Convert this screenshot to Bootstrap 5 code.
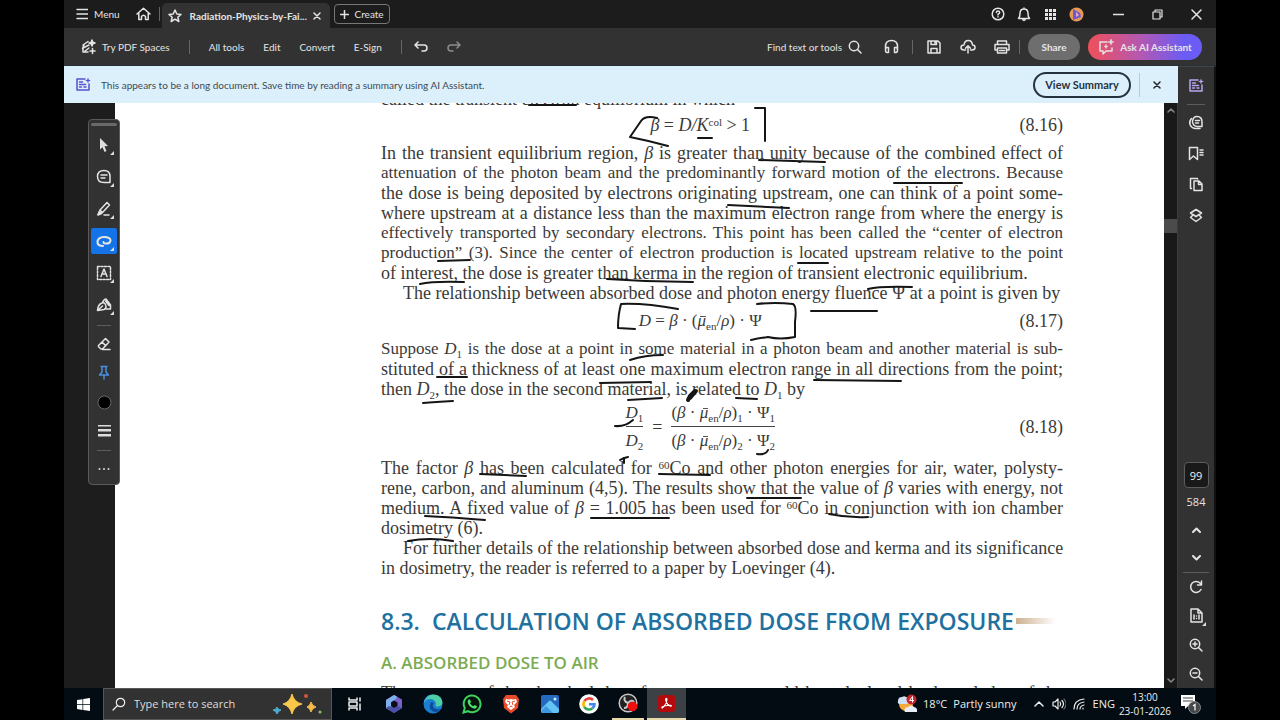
<!DOCTYPE html>
<html lang="en">
<head>
<meta charset="utf-8">
<meta name="viewport" content="width=device-width, initial-scale=1">
<title>Radiation-Physics-by-Fai...</title>
<link href="https://cdn.jsdelivr.net/npm/bootstrap@5.3.0/dist/css/bootstrap.min.css" rel="stylesheet">
<script defer src="https://cdn.jsdelivr.net/npm/bootstrap@5.3.0/dist/js/bootstrap.bundle.min.js"></script>
<style>
body{background:#000;font-family:"Open Sans","Noto Sans",sans-serif;font-size:11px;line-height:16px;color:#e4e4e4}
button{background:none;border:0;padding:0;color:inherit;white-space:nowrap;display:inline-flex;align-items:center;justify-content:center;gap:6px}
svg{flex:none;display:block}
.ic{fill:none;stroke:currentColor;stroke-width:1.5;stroke-linecap:round;stroke-linejoin:round}
.thin{stroke-width:1.2}
.bold{stroke-width:2}
.desk{margin:0 5%;height:100vh;min-height:480px;background:#1d1d1d}
.ui{font-family:Lato,"Open Sans",sans-serif;font-size:10px}
.titles{height:28px;background:#1c1c1c}
.tab-doc{background:#323232;width:168px;height:25px;border-radius:5px 5px 0 0;padding:0 9px 0 6px;margin-left:2px;font-weight:700}
.create{border:1px solid #777;border-radius:4px;height:20px;width:56px;margin-left:4px}
.cell{width:26px;height:26px}
.wcell{width:39px;height:26px}
.wgroup{margin-left:10px}
.tools{height:38px;background:#323232;border-bottom:1px solid #25303a;padding-right:14px}
.tools button{height:26px}
.item{margin-left:19px}
.vr-line{width:1px;height:14px;background:#666;flex:none}
.pill{border-radius:13px;font-weight:700}
.share{background:#6e6e6e;width:52px}
.ask{background:linear-gradient(90deg,#f0505a,#b558b0 45%,#6a5cf5 85%);width:114px}
.notice{height:37px;background:#dcf0fb;color:#3c4a54;padding-left:12px;flex:none}
.notice>svg{color:#5a4fcf;margin-right:10px}
.notice .vr-line{background:#b9cad5;height:24px}
.view{border:2px solid #26333f;border-radius:13px;width:98px;height:26px;color:#26333f;font-weight:700;font-size:11px}
.gutter{width:51px;background:#1d1d1d}
.sheet{background:#fff;overflow:hidden;padding:0 101px 0 266px}
.scroll{width:14px;background:#191919;color:#888;border-right:1px solid #3c3c3c}
.thumb{height:14px;background:#4b4b4b;margin-top:102px}
.rail{width:38px;background:#323232;border-right:2px solid #111;border-top:1px solid #444}
.rail button{width:36px}
.ai{height:37px;color:#b9a5ee}
.r31{height:31px}
.r28{height:28px}
.hr-line{height:1px;width:18px;background:#5c5c5c;flex:none;margin-bottom:2px}
.hr-wide{width:26px;margin:0}
.hr-tool{width:14px;margin:4px 0}
.pagebox{width:25px;height:26px;border:1px solid #5c5c5c;border-radius:4px;background:#191919;color:#eee;text-align:center;padding:0;font-size:11px}
.total{padding:6px 0 4px;margin-bottom:2px}
.palette{position:absolute;left:24px;top:16px;width:32px;height:366px;background:#323232;border:1px solid #5a5a5a;border-radius:4px;padding-top:8px}
.palette button{position:relative;width:26px;height:26px;border-radius:2px;margin:3px 0;flex:none}
.palette .tight{margin:1px 0 2px}
.more::after{content:"";position:absolute;right:3px;bottom:3px;border:2px solid;border-color:transparent #ddd #ddd transparent}
.rail .more{position:relative}
.rail .more::after{right:8px}
.palette .on{background:#1473e6}
.pin{color:#4b8fe0}
.grip{position:absolute;left:2px;right:2px;top:3px;height:3px;background:#6a6a6a;border-radius:2px}
.book{display:flow-root;position:relative;color:#3a3a38;font-family:"Liberation Serif",serif;font-size:18px;line-height:20px}
.book p{margin:0}
.book .cut{margin:-14px 0 6px}
.book .next{margin-top:10px}
.jl{display:block;text-align:justify;text-align-last:justify;white-space:nowrap}
.nl{display:block;white-space:nowrap}
.ind{padding-left:22px}
.book sup,.book sub{font-size:11px;line-height:0}
.book sub{bottom:-4px}
.bar{position:relative}
.bar::before{content:"";position:absolute;left:3px;right:0;top:5px;height:1px;background:#555}
.eq{display:flex;align-items:center;min-height:20px}
.eq>div:first-child{flex:1;display:flex;justify-content:center;align-items:center;gap:9px}
.frac{display:flex;flex-direction:column;text-align:center}
.frac>span{padding:4px 0 3px}
.frac>span:first-child{border-bottom:1px solid #444}
.narrow{font-size:17px}
.book h2{font:600 23px/28px "Open Sans",sans-serif;color:#20719f;margin:29px 0 0;white-space:nowrap}
.book h3{font:600 17px/20px "Open Sans",sans-serif;color:#7cac52;margin:18px 0 0}
.dash{width:40px;height:6px;background:linear-gradient(90deg,#cdb190,#fff);margin-left:2px}
.ink{position:absolute;left:0;top:0;overflow:visible;pointer-events:none;fill:none;stroke:#151515;stroke-width:2;stroke-linecap:round;stroke-linejoin:round}
.taskbar{height:32px;background:#020c12;color:#eee}
.tcell{width:39px;height:32px}
.first-app{margin-left:3px}
.find{width:229px;height:32px;background:#323232;border:1px solid #575757}
.find input{background:none;border:0;color:#ddd;width:140px;padding:0;font-size:11px;outline:0}
.find input::placeholder{color:#ddd;opacity:1}
.run{border-bottom:2px solid #e6d8a8}
.runbox{width:32px;height:32px}
.act{background:#3b4145}
.tray{padding-right:6px}
.tray .sm-ic{width:20px}
.clock{width:52px;line-height:14px;font-size:10px;gap:0}
</style>
</head>
<body>
<div class="desk d-flex flex-column">
  <header class="ui">
    <div class="titles d-flex align-items-center">
      <button class="ms-2 ps-1"><svg width="12" height="12" class="ic" viewBox="0 0 12 12"><path d="M1 1.500h11M1 6h11M1 10.500h11"/></svg><span>Menu</span></button>
      <button class="ms-3" aria-label="Home"><svg width="15" height="14" class="ic" viewBox="0 0 15 14"><path d="M1 7 7.500 1.300 14 7M2.800 6.500V12.500H5.500V9.500Q7.500 7 9.500 9.500V12.500H12.200V6.500"/></svg></button>
      <span class="vr-line ms-2"></span>
      <div class="tab-doc d-flex align-items-center align-self-end">
        <svg width="14" height="14" class="ic" viewBox="0 0 14 14"><path d="M7 1 8.800 5 13 5.400 9.800 8.200 10.800 12.500 7 10.200 3.200 12.500 4.200 8.200 1 5.400 5.200 5Z"/></svg>
        <span class="ms-2 text-nowrap">Radiation-Physics-by-Fai...</span>
        <button class="ms-auto" aria-label="Close tab"><svg width="8" height="8" class="ic" viewBox="0 0 8 8"><path d="M1 1 7 7M7 1 1 7"/></svg></button>
      </div>
      <button class="create"><svg width="9" height="9" class="ic" viewBox="0 0 9 9"><path d="M4.500 .5v8M.5 4.500h8"/></svg><span>Create</span></button>
      <div class="ms-auto d-flex align-items-center">
        <button class="cell" aria-label="Help"><svg width="14" height="14" class="ic" viewBox="0 0 14 14"><circle cx="7" cy="7" r="5.800"/><path d="M5.300 5.500Q5.500 4 7 4T8.700 5.500Q8.500 6.600 7 7.200V8M7 9.800v.1"/></svg></button>
        <button class="cell" aria-label="Notifications"><svg width="14" height="15" class="ic" viewBox="0 0 14 15"><path d="M1.500 11.500Q3 10 3 6.500 3 2 7 2T11 6.500Q11 10 12.500 11.500ZM5.500 12Q7 15 8.500 12M7 1v1"/></svg></button>
        <button class="cell" aria-label="Apps"><svg width="13" height="13" viewBox="0 0 13 13" fill="currentColor"><path d="M1 1h3v3H1zM5 1h3v3H5zM9 1h3v3H9zM1 5h3v3H1zM5 5h3v3H5zM9 5h3v3H9zM1 9h3v3H1zM5 9h3v3H5zM9 9h3v3H9z"/></svg></button>
        <button class="cell" aria-label="Account"><svg width="15" height="15" viewBox="0 0 15 15"><circle cx="7.500" cy="7.500" r="7" fill="#e69a55"/><path d="M4 2 11 6 12 10 4 13Z" fill="#6b5bd2"/><path d="M7 5 10 8 7 10Z" fill="#f3a6c0"/></svg></button>
        <div class="wgroup d-flex">
          <button class="wcell" aria-label="Minimize"><svg width="11" height="11" class="ic" viewBox="0 0 11 11"><path d="M0 5.500h11"/></svg></button>
          <button class="wcell" aria-label="Restore"><svg width="11" height="11" class="ic thin" viewBox="0 0 11 11"><path d="M1 3h7v7H1zM3 3V1h7v7H8"/></svg></button>
          <button class="wcell" aria-label="Close"><svg width="11" height="11" class="ic" viewBox="0 0 11 11"><path d="M1 1 10 10M10 1 1 10"/></svg></button>
        </div>
      </div>
    </div>
    <nav class="tools d-flex align-items-center">
      <button class="ms-3"><svg width="16" height="16" class="ic" viewBox="0 0 16 16"><path d="M3 6 8 2.500M3 9 9 6M3 9v4h5M5 12l4-3M4 6 2.500 9.500M12.500 9.500v5M10 12h5"/><path d="m12 1 .8 2.200L15 4l-2.200.8L12 7l-.8-2.200L9 4l2.200-.8z" fill="currentColor"/></svg><span>Try PDF Spaces</span></button>
      <span class="vr-line item"></span>
      <button class="item">All tools</button><button class="item">Edit</button><button class="item">Convert</button><button class="item">E-Sign</button>
      <span class="vr-line item"></span>
      <button class="ms-2 ps-1" aria-label="Undo"><svg width="14" height="12" class="ic" viewBox="0 0 14 12"><path d="M4 1 1 4 4 7M1.500 4H10Q13 4 13 7T10 10H8"/></svg></button>
      <button class="item opacity-50" aria-label="Redo"><svg width="14" height="12" class="ic" viewBox="0 0 14 12"><path d="M10 1 13 4 10 7M12.500 4H4Q1 4 1 7T4 10H6"/></svg></button>
      <div class="ms-auto d-flex align-items-center">
        <button class="me-3"><span>Find text or tools</span><svg width="14" height="14" class="ic" viewBox="0 0 14 14"><circle cx="6" cy="6" r="4.700"/><path d="M9.500 9.500 13 13"/></svg></button>
        <button class="cell" aria-label="Read aloud"><svg width="15" height="15" class="ic" viewBox="0 0 15 15"><path d="M1.500 10V7.500Q1.500 1.500 7.500 1.500T13.500 7.500V10M2 8.500h2.500v5H3Q1.500 13.500 1.500 11ZM13 8.500h-2.500v5H12Q13.500 13.500 13.500 11Z"/></svg></button>
        <span class="vr-line ms-2"></span>
        <button class="cell ms-2 me-2" aria-label="Save"><svg width="14" height="14" class="ic" viewBox="0 0 14 14"><path d="M1 1h10l2 2v10H1zM4 1v3.500h5.500V1M4 13V8.500h6V13M8 2v1"/></svg></button>
        <button class="cell me-2" aria-label="Upload"><svg width="16" height="15" class="ic" viewBox="0 0 16 15"><path d="M5.500 11H4Q1 11 1 8.500 1 6 4 6 4.500 1.500 8.300 1.500T12.500 6Q15 6 15 8.500T12 11h-1.500M8 14V7M5.500 9.300 8 6.800l2.500 2.500"/></svg></button>
        <button class="cell me-1" aria-label="Print"><svg width="16" height="14" class="ic" viewBox="0 0 16 14"><path d="M3.500 4V1h9v3M3.500 10H1V4.500h14V10h-2.500M3.500 8h9v5h-9zM5.500 10.500h5"/></svg></button>
        <span class="vr-line me-1"></span>
        <button class="pill share ms-1 me-2">Share</button>
        <button class="pill ask"><svg width="16" height="16" class="ic" viewBox="0 0 16 16"><path d="M9 3H2v9h3v3l3-3h6V9"/><path d="m13 0 .8 2.200L16 3l-2.200.8L13 6l-.8-2.200L10 3l2.200-.8zM8 5.500l.5 1.500 1.500.5-1.500.5L8 9.500 7.500 8 6 7.500 7.500 7z" fill="currentColor" stroke-width=".5"/></svg><span>Ask AI Assistant</span></button>
      </div>
    </nav>
  </header>

  <div class="d-flex flex-fill overflow-hidden">
    <main class="d-flex flex-column flex-fill overflow-hidden">
      <div class="notice ui d-flex align-items-center">
        <svg width="15" height="15" class="ic" viewBox="0 0 15 15"><path d="M9 2H1v11h12V7M3.500 5h3M3.500 7.500h6M3.500 10h2M8 10h2"/><path d="m12 .5.800 2.200 2.200.8-2.200.8L12 6.500l-.8-2.200L9 3.500l2.200-.8z" fill="currentColor" stroke="none"/></svg>
        <span>This appears to be a long document. Save time by reading a summary using AI Assistant.</span>
        <button class="view ms-auto">View Summary</button>
        <span class="vr-line ms-2"></span>
        <button class="cell ms-1 me-2 text-dark" aria-label="Dismiss"><svg width="8" height="8" class="ic" viewBox="0 0 8 8"><path d="M1 1 7 7M7 1 1 7"/></svg></button>
      </div>
      <div class="d-flex flex-fill overflow-hidden position-relative">
        <div class="gutter flex-shrink-0"></div>
        <article class="sheet flex-fill">
          <div class="book">
            <p class="cut nl">called the transient electron equilibrium in which</p>
            <div class="eq"><div><span><i>β</i> = <i>D/K</i><sup>col</sup> &gt; 1</span></div><span>(8.16)</span></div>
            <p class="mt-2">
              <span class="jl">In the transient equilibrium region, <i>β</i> is greater than unity because of the combined effect of</span>
              <span class="jl narrow">attenuation of the photon beam and the predominantly forward motion of the electrons. Because</span>
              <span class="jl">the dose is being deposited by electrons originating upstream, one can think of a point some-</span>
              <span class="jl">where upstream at a distance less than the maximum electron range from where the energy is</span>
              <span class="jl narrow">effectively transported by secondary electrons. This point has been called the “center of electron</span>
              <span class="jl narrow">production” (3). Since the center of electron production is located upstream relative to the point</span>
              <span class="nl">of interest, the dose is greater than kerma in the region of transient electronic equilibrium.</span>
            </p>
            <p class="nl ind">The relationship between absorbed dose and photon energy fluence Ψ at a point is given by</p>
            <div class="eq mt-2"><div><span class="narrow"><i>D</i> = <i>β</i> · (<i class="bar">μ</i><sub>en</sub>/<i>ρ</i>) · Ψ</span></div><span>(8.17)</span></div>
            <p class="mt-2">
              <span class="jl narrow">Suppose <i>D</i><sub>1</sub> is the dose at a point in some material in a photon beam and another material is sub-</span>
              <span class="jl">stituted of a thickness of at least one maximum electron range in all directions from the point;</span>
              <span class="nl">then <i>D</i><sub>2</sub>, the dose in the second material, is related to <i>D</i><sub>1</sub> by</span>
            </p>
            <div class="eq"><div>
              <span class="frac narrow"><span><i>D</i><sub>1</sub></span><span><i>D</i><sub>2</sub></span></span>
              <span>=</span>
              <span class="frac narrow"><span>(<i>β</i> · <i class="bar">μ</i><sub>en</sub>/<i>ρ</i>)<sub>1</sub> · Ψ<sub>1</sub></span><span>(<i>β</i> · <i class="bar">μ</i><sub>en</sub>/<i>ρ</i>)<sub>2</sub> · Ψ<sub>2</sub></span></span>
            </div><span>(8.18)</span></div>
            <p class="mt-1">
              <span class="jl">The factor <i>β</i> has been calculated for <sup>60</sup>Co and other photon energies for air, water, polysty-</span>
              <span class="jl">rene, carbon, and aluminum (4,5). The results show that the value of <i>β</i> varies with energy, not</span>
              <span class="jl">medium. A fixed value of <i>β</i> = 1.005 has been used for <sup>60</sup>Co in conjunction with ion chamber</span>
              <span class="nl">dosimetry (6).</span>
            </p>
            <p>
              <span class="jl ind">For further details of the relationship between absorbed dose and kerma and its significance</span>
              <span class="nl">in dosimetry, the reader is referred to a paper by Loevinger (4).</span>
            </p>
            <h2 class="d-flex align-items-center"><span class="me-2 pe-1">8.3.</span><span>CALCULATION OF ABSORBED DOSE FROM EXPOSURE</span><span class="dash"></span></h2>
            <h3>A. ABSORBED DOSE TO AIR</h3>
            <p class="jl next">The concept of the absorbed dose from exposure would be calculated by knowledge of the</p>
            <svg class="ink" width="682" height="585" viewBox="381 103 682 585">
              <path d="M529 105H576M657 118Q645 115 641 121L630 137Q650 141 668 146M698 138H712M755 108H765V141M759 160 825 162M894 183H962M728 205 789 208M438 261 470 260M798 263H828M420 284Q433 281 464 282M607 279Q650 282 693 282M868 289Q880 286 912 287M811 311H877M678 309Q645 303 621 304Q618 315 618 328L635 329M757 304Q775 302 793 304Q797 306 795 322V337Q780 340 768 337 760 338 751 340M630 360Q645 355 663 355M437 377H467M814 380 901 381M423 403Q435 402 453 401M600 383 651 382M628 400 662 398M736 398 757 399M615 426Q625 427 633 420M757 454Q766 455 768 450M620 460Q623 458 628 457M624 458V463M480 474 526 476M659 474 710 475M747 498H801M425 516Q450 517 485 520M591 518H669M829 514Q848 518 868 517M408 541Q430 537 453 541"/>
              <path d="m688 400 2-4 5-5M690 398l6-7" stroke-width="4"/>
            </svg>
          </div>
        </article>
        <div class="scroll flex-shrink-0 d-flex flex-column align-items-center">
          <svg width="8" height="14" class="ic" viewBox="0 0 8 14"><path d="M1 9 4 6 7 9"/></svg>
          <div class="thumb w-100"></div>
          <svg width="8" height="14" class="ic mt-auto" viewBox="0 0 8 14"><path d="M1 5 4 8 7 5"/></svg>
        </div>
        <div class="palette d-flex flex-column align-items-center">
          <span class="grip"></span>
          <button class="more mt-1" aria-label="Select"><svg width="16" height="16" viewBox="0 0 16 16" fill="#ddd"><path d="M4 1 12 9 8.500 9.300 10.500 14 8.500 15 6.500 10.300 4 12.500Z"/></svg></button>
          <button class="more" aria-label="Comment"><svg width="16" height="16" class="ic" viewBox="0 0 16 16"><path d="M8 1.500Q14 1.500 14 7.500V13.500H8Q1.500 13.500 1.500 7.500 1.500 1.500 8 1.500ZM5 6h6M5 9h4"/></svg></button>
          <button class="more" aria-label="Highlight"><svg width="16" height="16" class="ic" viewBox="0 0 16 16"><path d="M4 9 11 1.500 13.500 4 6.500 11.500ZM4 9 2 13.500 6.500 11.500M8 14h5"/><path d="M2 14 3.500 11l2 1.500z" fill="currentColor"/></svg></button>
          <button class="more on" aria-label="Draw"><svg width="16" height="14" class="ic bold" viewBox="0 0 16 14"><path d="M7 12Q2 12 1.500 8.500 1.500 3 8 3 14.500 3 14.500 6.500 14 10 9 9.500 7.500 9.500 7.500 8"/></svg></button>
          <button class="more" aria-label="Text"><svg width="16" height="16" class="ic" viewBox="0 0 16 16"><path d="M1.500 1.500h13v13h-13z" stroke-dasharray="2 1.500"/><path d="M5 11.500 8 4 11 11.500M6 9h4"/></svg></button>
          <button class="more" aria-label="Sign"><svg width="16" height="16" class="ic" viewBox="0 0 16 16"><path d="M1.500 13.500Q2 8 5 6.500 8 4.500 9.500 7.500 11 11 8 12.500 5 13 1.500 13.500ZM1.500 13.500 6.500 9M6.500 5.500Q8 2 10 2L14.500 8V12H10M9.500 4 13 8.500"/></svg></button>
          <span class="hr-line hr-tool"></span>
          <button class="tight" aria-label="Erase"><svg width="14" height="14" class="ic" viewBox="0 0 14 14"><path d="M1.500 8.500 8.500 1.500 12 5 5.500 12H4L1.500 9.800ZM5 5 8.800 8.800M5.500 12.500H13"/></svg></button>
          <button class="tight pin" aria-label="Pin"><svg width="12" height="16" class="ic" viewBox="0 0 12 16"><path d="M3 1.500h6M4 1.500V7L1.500 10h9L8 7V1.500M6 10v4"/></svg></button>
          <button class="tight" aria-label="Color"><svg width="15" height="15" viewBox="0 0 15 15"><circle cx="7.500" cy="7.500" r="6.500" stroke="#666"/></svg></button>
          <button class="tight" aria-label="Line width"><svg width="13" height="12" viewBox="0 0 13 12" fill="#ddd"><path d="M0 0h13v1.500H0zM0 4h13v2.500H0zM0 9h13v2.500H0z"/></svg></button>
          <span class="hr-line hr-tool"></span>
          <button class="tight" aria-label="More"><svg width="12" height="4" viewBox="0 0 12 4" fill="#ddd"><circle cx="1.500" cy="2" r="1"/><circle cx="6" cy="2" r="1"/><circle cx="10.500" cy="2" r="1"/></svg></button>
        </div>
      </div>
    </main>
    <aside class="rail d-flex flex-column align-items-center flex-shrink-0">
      <button class="ai" aria-label="AI summary"><svg width="15" height="15" class="ic" viewBox="0 0 15 15"><path d="M9 2H1v11h12V7M3.500 5h3M3.500 7.500h6M3.500 10h2M8 10h2"/><path d="m12 .5.800 2.200 2.200.8-2.200.8L12 6.500l-.8-2.200L9 3.500l2.200-.8z" fill="currentColor" stroke="none"/></svg></button>
      <span class="hr-line"></span>
      <button class="r31" aria-label="Comments"><svg width="16" height="15" class="ic" viewBox="0 0 16 15"><path d="M9 1.500Q14 1.500 14 7V11.500H9.500Q5 11.500 4.500 6.500 5 1.500 9 1.500ZM7.500 5.500h4M7.500 8h3M3.500 3.500Q1 6 2 9.500 3.500 13.500 8 13.500h4"/></svg></button>
      <button class="r31" aria-label="Bookmarks"><svg width="16" height="15" class="ic" viewBox="0 0 16 15"><path d="M1.500 1.500h8v12L5.500 10 1.500 13.500ZM12 4h3M12 6.500h3M12 9h3"/></svg></button>
      <button class="r31" aria-label="Pages"><svg width="14" height="15" class="ic" viewBox="0 0 14 15"><path d="M5 4h5l3 3v6.500H5ZM9.500 4v3.500H13M2.500 11.500H1.500V1.500h7V2"/></svg></button>
      <button class="r31" aria-label="Layers"><svg width="14" height="15" class="ic" viewBox="0 0 14 15"><path d="M7 1.500 12.500 5 7 8.500 1.500 5ZM3.500 7.500 1.500 9.500 7 13.500 12.500 9.500 10.500 7.500"/></svg></button>
      <input class="pagebox mt-auto" value="99" aria-label="Page number">
      <span class="total">584</span>
      <button class="r28" aria-label="Previous page"><svg width="9" height="6" class="ic bold" viewBox="0 0 9 6"><path d="M1 5 4.500 1.500 8 5"/></svg></button>
      <button class="r28" aria-label="Next page"><svg width="9" height="6" class="ic bold" viewBox="0 0 9 6"><path d="M1 1 4.500 4.500 8 1"/></svg></button>
      <span class="hr-line hr-wide"></span>
      <button class="r28" aria-label="Rotate"><svg width="14" height="14" class="ic" viewBox="0 0 14 14"><path d="M11.500 3.500A5.500 5.500 0 1 0 12 9.500M12.500 1v4h-4"/></svg></button>
      <button class="r28 more" aria-label="Actual size"><svg width="13" height="15" class="ic" viewBox="0 0 13 15"><path d="M1 1h7l4 4v9H1ZM8 1v4h4M4 7v4M9 7v4M6.500 8v.1M6.500 10.500v.1"/></svg></button>
      <button class="r31" aria-label="Zoom in"><svg width="14" height="14" class="ic" viewBox="0 0 14 14"><circle cx="6" cy="6" r="4.700"/><path d="M9.500 9.500 13 13M4 6h4M6 4v4"/></svg></button>
      <button class="r28" aria-label="Zoom out"><svg width="14" height="14" class="ic" viewBox="0 0 14 14"><circle cx="6" cy="6" r="4.700"/><path d="M9.500 9.500 13 13M4 6h4"/></svg></button>
    </aside>
  </div>

  <footer class="taskbar d-flex align-items-center flex-shrink-0">
    <button class="tcell" aria-label="Start"><svg width="13" height="13" viewBox="0 0 13 13" fill="#fff"><path d="M0 2 5.500 1.200V6.200H0ZM6.200 1.100 13 0V6.200H6.200ZM0 6.900H5.500V11.900L0 11ZM6.200 6.900H13V13L6.200 12Z"/></svg></button>
    <label class="find d-flex align-items-center px-2"><svg width="14" height="14" class="ic thin me-2" viewBox="0 0 14 14"><circle cx="8.500" cy="5.500" r="4.200"/><path d="M5.500 8.500 1 13"/></svg><input type="text" placeholder="Type here to search" aria-label="Search">
      <svg width="50" height="24" viewBox="0 0 50 24"><path d="M19 2Q21 10 29 12 21 14 19 22 17 14 10 12 17 10 19 2Z" fill="#f9c74a" stroke="#f9c74a"/><path d="M38 10q1 4 5 5-4 1-5 5-1-4-4-5 3-1 4-5z" fill="#f6bd4a" stroke="#f6bd4a"/><path d="M4 15q1 3 4 3-3 1-4 4-1-3-4-4 3 0 4-3z" fill="#4bacd2" stroke="#4bacd2"/><circle cx="33" cy="4" r="2" fill="#d1583f"/><circle cx="47" cy="20" r="1.500" fill="#8cc06a"/></svg></label>
    <button class="tcell first-app" aria-label="Task view"><svg width="14" height="14" class="ic" viewBox="0 0 14 14"><path d="M1 1v2h8V1M1 5h8v4H1ZM1 13v-2h8v2M12 1v3M12 7v6"/></svg></button>
    <button class="tcell" aria-label="Microsoft 365"><svg width="20" height="20" viewBox="0 0 20 20"><path d="M10 1 18 5.500V14L10 19 2 14V6Z" fill="#7a62c9"/><path d="M10 1 2 6v8l5 3V8l5-3 1-2.500z" fill="#7db1ee"/><path d="M2 14l8 5 8-5-4-2-4 2-5-2z" fill="#4b51a8"/><path d="M10 6.500 13.500 8.500v3.500L10 14 7 12V8.500Z" fill="#0a1017"/></svg></button>
    <button class="tcell" aria-label="Edge"><svg width="20" height="20" viewBox="0 0 20 20"><circle cx="10" cy="10" r="9.500" fill="#1c7ed0"/><path d="M.6 9Q3 0 11 .6 19 1.500 19.500 8.500 19 13 13 12.500 12 12 13 10 12 5 7 5 2 5.500.6 9Z" fill="#4ccfa5"/><path d="M.6 9Q2 2 9 .6 4 3 3 7Z" fill="#35a7df"/><path d="M8 8Q4 16 12 18 16 18 18 15 12 16.500 10 13 9 11 11 9Z" fill="#0c4b98"/></svg></button>
    <button class="tcell" aria-label="WhatsApp"><svg width="20" height="20" viewBox="0 0 20 20"><path d="M1.500 18.500 2.800 14A8.400 8.400 0 1 1 6 17.200Z" fill="#06150c" stroke="#3fd05e" stroke-width="2"/><path d="M6.500 5.500 8 5.500 9 8 8 9.200Q9.500 11.500 11.500 12.200L12.700 11 15 12.200Q15 14.500 12.500 14.700 8 14 6 9.500 5 7 6.500 5.500Z" fill="#4fe06e"/></svg></button>
    <button class="tcell" aria-label="Brave"><svg width="18" height="20" viewBox="0 0 18 20"><path d="M4 1h10l3 4-1 9-7 5.500L2 14 1 5Z" fill="#e84a2c"/><path d="m4 5 3 .5L9 5l2 .5 3-.5 1 3-3 3 1 2-4 3-4-3 1-2-3-3z" fill="#fff"/><path d="m5 7 3 1-1 3M13 7l-3 1 1 3M7.500 13 9 12l1.500 1" stroke="#e84a2c" fill="none"/></svg></button>
    <button class="tcell" aria-label="Photos"><svg width="18" height="18" viewBox="0 0 18 18"><rect width="18" height="18" rx="2" fill="#246bc0"/><path d="M0 14 8 6Q9 5 10 6L18 14V16Q18 18 16 18H2Q0 18 0 16Z" fill="#64c3f3"/><path d="M0 16 5 11 12 18H2Z" fill="#3d98e1"/><circle cx="14" cy="4" r="1.500" fill="#d9efff"/></svg></button>
    <button class="tcell" aria-label="Google"><svg width="20" height="20" viewBox="0 0 20 20" fill="none" stroke-width="2.600"><circle cx="10" cy="10" r="9.800" fill="#fff"/><path d="M5.500 7A5.500 5.500 0 0 1 14 6" stroke="#e94235"/><path d="M5.300 13A5.500 5.500 0 0 1 5.500 7" stroke="#fabb05"/><path d="M5.300 13A5.500 5.500 0 0 0 13.500 14.200" stroke="#34a853"/><path d="M13.500 14.200Q15.500 12.500 15.500 10.300H10" stroke="#4285f4"/></svg></button>
    <button class="tcell" aria-label="OBS"><span class="run runbox d-flex align-items-center justify-content-center"><svg width="20" height="20" viewBox="0 0 20 20" fill="none" stroke="#c8c8c8"><circle cx="10" cy="10" r="8.800" fill="#222" stroke-width="1.500"/><path d="M10 10Q5 8 7 4M10 10Q14 6 16 9M10 10Q10 15 6 15" stroke-width="2"/><circle cx="14.500" cy="13.500" r="4.800" fill="#f00f0f" stroke="none"/></svg></span></button>
    <button class="tcell run act" aria-label="Acrobat"><svg width="17" height="17" viewBox="0 0 17 17"><rect width="17" height="17" rx="3" fill="#b30b0b"/><path d="M8 3.500Q9 3 9 5 8.500 9 4.500 13 3.500 13 4 12 7 10 12.500 10.200 14 10.500 13 11.300 9 10.500 7.700 5 7.500 4 8 3.500Z" fill="none" stroke="#fff" stroke-width="1.100" stroke-linejoin="round"/></svg></button>
    <div class="tray ms-auto d-flex align-items-center">
      <button class="me-1"><svg width="20" height="20" viewBox="0 0 20 20"><circle cx="9" cy="10" r="7" fill="#f5a93a"/><path d="M1 7q0-4 4-4 3-2 5 1l3 3-3 3H3Q0 10 1 7z" fill="#cfe0f3"/><path d="M8 18q-2-4 3-5 4-3 6 0 4 1 3 5z" fill="#e8eef8"/><circle cx="14.500" cy="5.500" r="5" fill="#c8232c"/><path d="M15.500 8.500v-6L12.500 6.500h4.500" fill="none" stroke="#fff"/></svg><span>18°C</span><span>Partly sunny</span></button>
      <button class="sm-ic ms-2" aria-label="Hidden icons"><svg width="10" height="6" class="ic" viewBox="0 0 10 6"><path d="M1 5 5 1 9 5"/></svg></button>
      <button class="sm-ic" aria-label="Volume"><svg width="14" height="12" class="ic thin" viewBox="0 0 14 12"><path d="M1 4h2l3-3v10L3 8H1ZM8 4q1.500 2 0 4M10 2.500q3 3.500 0 7"/><path d="M12 1q4 5 0 10" opacity=".4"/></svg></button>
      <button class="sm-ic me-1" aria-label="Network"><svg width="12" height="12" class="ic thin" viewBox="0 0 12 12"><path d="M1 11Q1 2 11 1M4 11Q4 5 11 4M7 11Q7 8 11 7M10 11v-1"/></svg></button>
      <button class="me-1">ENG</button>
      <button class="clock flex-column text-center"><span>13:00</span><span>23-01-2026</span></button>
      <button class="tcell" aria-label="Action center"><svg width="22" height="22" viewBox="0 0 22 22"><path d="M1 2h14v11H8l-3 3v-3H1z" fill="#fff"/><path d="M3 5h10M3 8h10" stroke="#444"/><circle cx="14.500" cy="14.500" r="6" fill="#44484b" stroke="#888"/><path d="m13 13 2-1.500v6" fill="none" stroke="#fff" stroke-width="1.200"/></svg></button>
    </div>
  </footer>
</div>
</body>
</html>
